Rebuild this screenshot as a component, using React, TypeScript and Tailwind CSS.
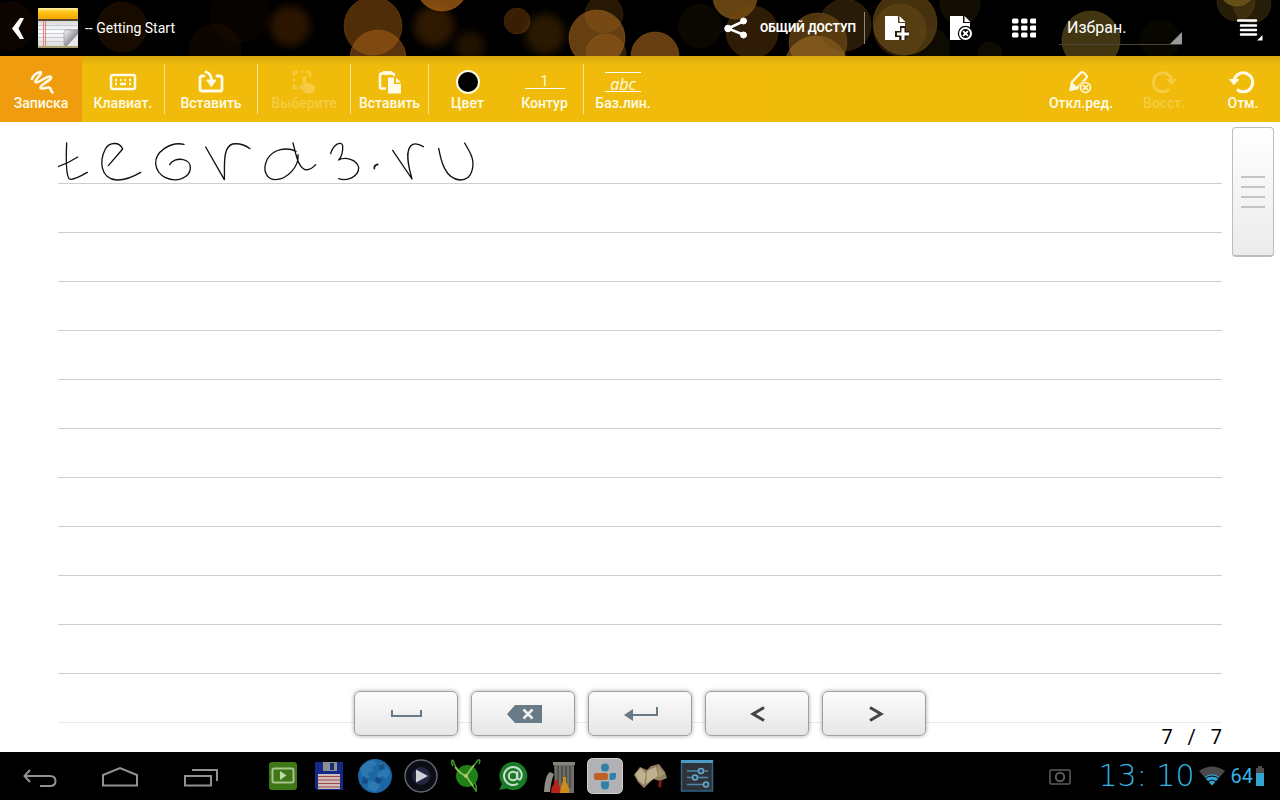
import type { ReactNode } from 'react';

const bokeh: [number, number, number, string, number][] = [
  [10, 26, 24, '#5a2a00', 0.15],
  [122, 27, 25, '#6a3200', 0.22],
  [240, 12, 30, '#5a2a00', 0.08],
  [215, 50, 26, '#5a2a00', 0.14],
  [373, 26, 29, '#a85e12', 0.48],
  [378, 58, 28, '#b0661a', 0.5],
  [442, -15, 26, '#c07018', 0.65],
  [517, 21, 13, '#8a4c0a', 0.4],
  [604, 14, 19, '#9a5a14', 0.25],
  [597, 38, 28, '#b06c1e', 0.58],
  [606, 54, 20, '#c07a28', 0.25],
  [655, 56, 24, '#a8691c', 0.6],
  [700, 26, 22, '#4a2c06', 0.15],
  [735, -3, 22, '#a87020', 0.6],
  [752, 32, 26, '#7a4a10', 0.38],
  [818, 42, 29, '#9e681c', 0.5],
  [816, 68, 32, '#b07828', 0.5],
  [845, 25, 26, '#6a4814', 0.38],
  [905, 23, 32, '#80591a', 0.55],
  [900, 30, 26, '#8a661e', 0.25],
  [960, 4, 20, '#5a4412', 0.2],
  [930, 48, 20, '#5a4412', 0.16],
  [990, 54, 12, '#5a4412', 0.16],
  [1091, 40, 29, '#786020', 0.55],
  [1160, 40, 20, '#3a2e0c', 0.12],
  [1237, -12, 18, '#a88c30', 0.55],
  [1236, 2, 19, '#6a5418', 0.35],
  [1252, 4, 19, '#6a5418', 0.35],
];

const haze: [number, number, number, string, number][] = [
  [290, 26, 20, '#7a3800', 0.35],
  [434, 26, 20, '#7a4205', 0.38],
  [470, 46, 14, '#7a4205', 0.28],
  [545, 34, 20, '#6e3e08', 0.38],
];

function Bokeh() {
  return (
    <svg aria-hidden="true" className="absolute inset-0 h-full w-full" viewBox="0 0 1280 56" preserveAspectRatio="xMidYMid slice">
      <defs>
        <filter id="soft" x="-50%" y="-50%" width="200%" height="200%">
          <feGaussianBlur stdDeviation="4" />
        </filter>
      </defs>
      <g filter="url(#soft)">
        {haze.map(([x, y, r, c, o], i) => (
          <circle key={i} cx={x} cy={y} r={r} fill={c} fillOpacity={o} />
        ))}
      </g>
      {bokeh.map(([x, y, r, c, o], i) => (
        <circle key={i} cx={x} cy={y} r={r} fill={c} fillOpacity={o} stroke={c} strokeOpacity={o * 0.7} strokeWidth="1" />
      ))}
    </svg>
  );
}

function NoteAppIcon() {
  return (
    <svg width="42" height="42" viewBox="0 0 42 42" aria-hidden="true">
      <defs>
        <linearGradient id="band" x1="0" y1="0" x2="0" y2="1">
          <stop offset="0" stopColor="#fff3b0" />
          <stop offset="0.3" stopColor="#ffc61a" />
          <stop offset="1" stopColor="#f2a000" />
        </linearGradient>
        <linearGradient id="sheet" x1="0" y1="0" x2="0" y2="1">
          <stop offset="0" stopColor="#d8d8d8" />
          <stop offset="0.4" stopColor="#ffffff" />
          <stop offset="1" stopColor="#dadada" />
        </linearGradient>
        <linearGradient id="curl" x1="0" y1="0" x2="1" y2="1">
          <stop offset="0" stopColor="#ffffff" />
          <stop offset="0.6" stopColor="#8e8e96" />
          <stop offset="1" stopColor="#d0d0d4" />
        </linearGradient>
      </defs>
      <rect x="1" y="1" width="40" height="12" rx="1" fill="url(#band)" />
      <rect x="1" y="12" width="40" height="2" fill="#5a4a30" />
      <rect x="1" y="14" width="40" height="26" fill="url(#sheet)" />
      <path d="M1 18.500H41M1 22.500H41M1 26.500H41M1 30.500H41M1 34.500H41" stroke="#c4cad2" strokeWidth="1" />
      <path d="M6.500 14V40M8.500 14V40" stroke="#ec7a7a" strokeWidth="1" />
      <path d="M27 38V25Q27 23 29 23H41L41 27L30 39Z" fill="url(#curl)" stroke="#8a8a90" strokeWidth="0.600" />
      <path d="M41 27L41 39H30Z" fill="#e8e8ea" />
      <rect x="1" y="39" width="40" height="2" fill="#a8a070" />
    </svg>
  );
}

function Glyph({ children }: { children: ReactNode }) {
  return (
    <svg width="40" height="24" viewBox="0 0 40 24" fill="none" stroke="currentColor" strokeWidth="2.500" strokeLinecap="round" strokeLinejoin="round" aria-hidden="true">
      {children}
    </svg>
  );
}

function Tool({ label, width, divider, active, disabled, children }: {
  label: string;
  width: string;
  divider?: boolean;
  active?: boolean;
  disabled?: boolean;
  children: ReactNode;
}) {
  return (
    <div className={`flex shrink-0 items-center ${width} ${active ? 'bg-[#ef9d0f]' : ''}`}>
      <button
        type="button"
        disabled={disabled}
        aria-pressed={active}
        className={`flex h-full min-w-0 flex-1 flex-col items-center pt-[14px] text-sm leading-[18px] font-medium whitespace-nowrap ${disabled ? 'text-[#f6cb42]' : 'text-[#fffbe6]'}`}
      >
        {children}
        <span>{label}</span>
      </button>
      {divider && <span className="h-[50px] w-px bg-[#f9e39a]" />}
    </div>
  );
}

function Ink() {
  return (
    <svg width="442" height="62" viewBox="54 -6 1326 186" fill="none" stroke="#111" strokeWidth="4" strokeLinecap="round" strokeLinejoin="round" role="img" aria-label="tegra3.ru">
      <path d="M80 57C78 100 77 150 87 164C97 172 125 155 142 145M54 128C75 121 95 111 113 99" />
      <path d="M205 125L248 75C238 52 208 54 196 75C178 110 180 164 230 168C255 169 285 155 302 145" />
      <path d="M432 61C390 52 344 85 347 120C352 160 395 175 425 164C460 150 458 112 430 107C412 103 395 110 389 122" />
      <path d="M497 69L553 167C555 130 546 70 578 60C600 57 618 65 630 74" />
      <path d="M768 82C740 68 700 75 682 105C665 140 680 167 708 167C745 164 778 125 774 92M759 57C768 90 773 127 795 137C808 139 820 130 827 122" />
      <path d="M872 89C880 60 904 50 908 65C909 82 903 100 896 108C915 98 950 105 956 130C957 158 922 173 896 164" />
      <path d="M1003 134C1002 126 1008 122 1013 121" strokeWidth="5" />
      <path d="M1058 79L1116 165C1106 130 1092 75 1118 61C1130 57 1142 63 1150 68" />
      <path d="M1196 73C1203 110 1215 165 1260 168C1302 168 1305 115 1291 88C1285 75 1279 66 1274 57" />
    </svg>
  );
}

function PadKey({ label, children }: { label: string; children: ReactNode }) {
  return (
    <button
      type="button"
      aria-label={label}
      className="flex h-[45px] w-[104px] items-center justify-center rounded-md border border-[#a0a0a0] bg-linear-to-b from-[#fcfcfc] to-[#e6e6e6] shadow-[0_0_4px_rgba(0,0,0,0.35)]"
    >
      <svg width="48" height="24" viewBox="0 0 48 24" fill="none" aria-hidden="true">{children}</svg>
    </button>
  );
}

function Dock({ label, children }: { label: string; children: ReactNode }) {
  return (
    <button type="button" aria-label={label} className="flex w-[46px] shrink-0 items-center justify-center">
      <svg width="40" height="40" viewBox="0 0 40 40" fill="none" aria-hidden="true">{children}</svg>
    </button>
  );
}

function SysButton({ label, children }: { label: string; children: ReactNode }) {
  return (
    <button type="button" aria-label={label} className="flex w-20 shrink-0 items-center justify-center">
      <svg width="40" height="24" viewBox="0 0 40 24" fill="none" stroke="#929292" strokeWidth="2" aria-hidden="true">{children}</svg>
    </button>
  );
}

const rules = Array.from({ length: 10 }, (_, i) => i);

export default function App() {
  return (
    <div className="flex min-h-screen flex-col bg-white font-[Roboto,'Noto_Sans',sans-serif]">
      <header className="relative h-14 overflow-hidden bg-black text-white">
        <Bokeh />
        <div className="relative flex h-full items-stretch">
          <button type="button" aria-label="Назад" className="flex items-center gap-3 pl-3">
            <svg width="13" height="24" viewBox="0 0 13 24" aria-hidden="true">
              <path d="M8 2H12L6.500 12.500L12 23H8L0 12.500Z" fill="#fff" />
            </svg>
            <NoteAppIcon />
          </button>
          <h1 className="ml-[6px] self-center text-sm font-normal">-- Getting Start</h1>
          <div className="ml-auto flex items-stretch">
            <button type="button" className="flex items-center gap-3 pr-2 pl-3 text-xs font-bold whitespace-nowrap">
              <svg width="24" height="22" viewBox="0 0 24 22" fill="#fff" stroke="#fff" aria-hidden="true">
                <path d="M19 4.500L4 11.500L19 17.500" fill="none" strokeWidth="2.500" />
                <circle cx="19.500" cy="4" r="3" />
                <circle cx="4" cy="11.500" r="3.300" />
                <circle cx="19.500" cy="18" r="3" />
              </svg>
              <span>ОБЩИЙ ДОСТУП</span>
            </button>
            <span className="h-8 w-px self-center bg-[#8f8878]" />
            <button type="button" aria-label="Добавить страницу" className="flex w-16 items-center justify-center">
              <svg width="24" height="24" viewBox="0 0 24 24" aria-hidden="true">
                <path d="M0 0H13V7H20V14H15V16H11V21H14V24H0Z" fill="#fff" />
                <path d="M14.500 0L20.500 6H14.500Z" fill="#fff" />
                <path d="M18 10V24M10 18H24" stroke="#2a1c08" strokeWidth="6" />
                <path d="M18 12V24M12 18H24" stroke="#fff" strokeWidth="3" />
              </svg>
            </button>
            <button type="button" aria-label="Удалить страницу" className="flex w-16 items-center justify-center">
              <svg width="24" height="24" viewBox="0 0 24 24" aria-hidden="true">
                <path d="M1 0H14V7H21V24H1Z" fill="#fff" />
                <path d="M15.500 0L21.500 6H15.500Z" fill="#fff" />
                <circle cx="16.500" cy="17.500" r="7.700" fill="#050300" />
                <circle cx="16.500" cy="17.500" r="5.500" fill="none" stroke="#fff" strokeWidth="2" />
                <path d="M14.100 15.100L18.900 19.900M18.900 15.100L14.100 19.900" stroke="#fff" strokeWidth="2" />
              </svg>
            </button>
            <button type="button" aria-label="Все страницы" className="flex w-[62px] items-center justify-center">
              <svg width="24" height="20" viewBox="0 0 24 20" fill="#fff" aria-hidden="true">
                {[0, 7, 14].map((y) => [0, 9, 18].map((x) => <rect key={`${x}-${y}`} x={x} y={y + 0.5} width="6.500" height="5" rx="1.500" />))}
              </svg>
            </button>
            <div className="relative ml-1 w-[123px] self-center border-b border-[#4a4636]">
              <select aria-label="Избранное" defaultValue="fav" className="h-8 w-full appearance-none bg-transparent pl-2 text-base text-white outline-none">
                <option value="fav">Избран.</option>
              </select>
              <svg className="pointer-events-none absolute right-0 bottom-0" width="12" height="12" viewBox="0 0 12 12" aria-hidden="true">
                <path d="M12 0V12H0Z" fill="#9a9a9a" />
              </svg>
            </div>
            <button type="button" aria-label="Меню" className="ml-[38px] flex w-[60px] items-center justify-center">
              <svg width="26" height="26" viewBox="0 0 26 26" fill="none" stroke="#fff" aria-hidden="true">
                <path d="M1 5.500H19M4 10.500H19M4 15H19M4 19.500H19" strokeWidth="2.500" strokeLinecap="round" />
                <path d="M25.500 20V25.500H20Z" fill="#fff" stroke="none" />
              </svg>
            </button>
          </div>
        </div>
      </header>

      <nav aria-label="Инструменты" className="flex h-[66px] items-stretch bg-linear-to-b from-[#d9a90c] via-[#f0bb0b] via-15% to-[#f0bb0b]">
        <Tool label="Записка" width="w-[82px]" active>
          <Glyph>
            <path d="M11 9C11.500 6 16 2 19.500 2C22 4 13.500 9.500 14.500 12C18 14 24 6 29.500 6.500C33 9.500 18.500 14.500 19.500 18C22 20 27 16 29 18C30.500 20 30 22 31.500 22.500" strokeWidth="2.600" />
          </Glyph>
        </Tool>
        <Tool label="Клавиат." width="w-[83px]" divider>
          <Glyph>
            <rect x="8" y="5" width="24" height="14" rx="2" />
            <path d="M12 10H14M17 10H18.500M21.500 10H23M26 10H28M12 14H14M17 14H23M26 14H28" strokeWidth="2.500" strokeLinecap="butt" />
          </Glyph>
        </Tool>
        <Tool label="Вставить" width="w-[93px]" divider>
          <Glyph>
            <path d="M13 6H11Q9 6 9 8V19Q9 21 11 21H29Q31 21 31 19V8Q31 6 29 6H26" strokeWidth="2.800" />
            <path d="M15 2C19 3 20.500 6 20.500 11" strokeWidth="2.800" />
            <path d="M16 10H25L20.500 16.500Z" fill="currentColor" strokeWidth="1" />
          </Glyph>
        </Tool>
        <Tool label="Выберите" width="w-[93px]" divider disabled>
          <Glyph>
            <path d="M10 6V2H14M22 2H26V7M10 14V18H14M17 2H19M10 9V11" strokeWidth="2.500" strokeLinecap="butt" />
            <path d="M19 7Q20.500 6 21.500 7.500V13L28 14.500Q30.500 15 30.500 18L29 23H22L15.500 17Q15.500 15 17.500 15.500L19 16.500Z" fill="currentColor" strokeWidth="1" />
          </Glyph>
        </Tool>
        <Tool label="Вставить" width="w-[78px]" divider>
          <Glyph>
            <path d="M15 18.500H11.500Q10 18.500 10 17V5Q10 3.500 11.500 3.500H22.500Q24 3.500 24 5" strokeWidth="2.500" />
            <path d="M13.500 1.500H21.500V4H13.500Z" fill="currentColor" strokeWidth="1" />
            <path d="M18 7.500H24V14H31V23.500H18Z" fill="currentColor" stroke="none" />
            <path d="M26 7.500L31 12.500H26Z" fill="currentColor" stroke="none" />
          </Glyph>
        </Tool>
        <Tool label="Цвет" width="w-[77px]">
          <Glyph>
            <circle cx="20" cy="12" r="11" fill="#000" strokeWidth="2" />
          </Glyph>
        </Tool>
        <Tool label="Контур" width="w-[78px]" divider>
          <span className="flex h-6 w-10 items-start justify-center">
            <span className="w-10 border-b border-white pt-1 text-center text-sm leading-[14px] font-normal">1</span>
          </span>
        </Tool>
        <Tool label="Баз.лин." width="w-[78px]">
          <span className="flex h-6 w-9 flex-col pt-[2px]">
            <span className="h-5 border-y border-white pt-[2px] text-center font-['Open_Sans',sans-serif] text-base leading-[18px] font-normal italic">abc</span>
          </span>
        </Tool>
        <div className="ml-auto flex items-stretch">
          <Tool label="Откл.ред." width="w-[82px]">
            <Glyph>
              <path d="M9.500 20L11 12L20 2.500Q21.500 1.500 23 3L25.500 5.500Q26.500 7 25 8.500L16 18Z" strokeWidth="2.300" />
              <path d="M9 21L11 12L18 19Z" fill="currentColor" stroke="none" />
              <circle cx="24.500" cy="17.500" r="6.500" fill="#f0bb0b" stroke="none" />
              <circle cx="24.500" cy="17.500" r="5" strokeWidth="1.500" />
              <path d="M22.500 15.500L26.500 19.500M26.500 15.500L22.500 19.500" strokeWidth="1.600" />
            </Glyph>
          </Tool>
          <Tool label="Восст." width="w-[84px]" disabled>
            <Glyph>
              <path d="M25 19.500A9.500 9.500 0 1 1 28 10" strokeWidth="3" strokeLinecap="butt" />
              <path d="M23 9.500H32L28 14.500Z" fill="currentColor" strokeWidth="1" />
            </Glyph>
          </Tool>
          <Tool label="Отм." width="w-[74px]">
            <Glyph>
              <path d="M14 19.500A9.500 9.500 0 1 0 11 10" strokeWidth="3" strokeLinecap="butt" />
              <path d="M7 9.500H16L11 14.500Z" fill="currentColor" strokeWidth="1" />
            </Glyph>
          </Tool>
        </div>
      </nav>

      <main className="relative flex flex-1 flex-col bg-white">
        <div className="flex items-start">
          <div className="ml-[58px] min-w-0 flex-1">
            <div className="h-[62px] border-b border-[#cfcfcf]">
              <Ink />
            </div>
            {rules.map((i) => (
              <div key={i} className="h-[49px] border-b border-[#cfcfcf]" />
            ))}
            <div className="h-[49px] border-b border-[#e8e8e8]" />
          </div>
          <div className="flex w-[58px] shrink-0 justify-end pt-[5px] pr-[6px]">
            <div className="flex h-[130px] w-[42px] flex-col items-center justify-center gap-2 rounded border border-b-2 border-[#bdbdbd] bg-linear-to-b from-white to-[#ebebeb]">
              <span className="h-[2px] w-6 bg-[#c4c4c4]" />
              <span className="h-[2px] w-6 bg-[#c4c4c4]" />
              <span className="h-[2px] w-6 bg-[#c4c4c4]" />
              <span className="h-[2px] w-6 bg-[#c4c4c4]" />
            </div>
          </div>
        </div>
        <p className="pr-[58px] text-right text-xl leading-7 whitespace-pre text-black">7   /   7</p>

        <div className="absolute inset-x-0 bottom-4 flex justify-center gap-[13px]">
          <PadKey label="Пробел">
            <path d="M10 8V14H39V8" stroke="#687a86" strokeWidth="2" />
          </PadKey>
          <PadKey label="Удалить">
            <path d="M8 12L16 3H43V21H16Z" fill="#687a86" />
            <path d="M24.500 7.500L33.500 16.500M33.500 7.500L24.500 16.500" stroke="#f0f0f0" strokeWidth="2.500" />
          </PadKey>
          <PadKey label="Ввод">
            <path d="M41 5V13H15" stroke="#687a86" strokeWidth="2" />
            <path d="M8 13L17 7V19Z" fill="#687a86" />
          </PadKey>
          <PadKey label="Курсор влево">
            <path d="M31 5.500L20 12L31 18.500" stroke="#444" strokeWidth="3" />
          </PadKey>
          <PadKey label="Курсор вправо">
            <path d="M20 5.500L31 12L20 18.500" stroke="#444" strokeWidth="3" />
          </PadKey>
        </div>
      </main>

      <footer className="flex h-12 items-stretch bg-black">
        <SysButton label="Назад">
          <path d="M20 22H30Q35.500 22 35.500 17Q35.500 12 30 12H5M10 6L4.500 12L10 18" />
        </SysButton>
        <SysButton label="Домой">
          <path d="M3 21.500V11L20 4L37 11V21.500Z" />
        </SysButton>
        <SysButton label="Недавние">
          <path d="M5 12H31V21.500H5ZM12 6H37V17" />
        </SysButton>
        <div className="ml-5 flex items-stretch">
          <Dock label="Видео">
            <rect x="6" y="6" width="28" height="28" rx="3" fill="#3f7716" />
            <rect x="9.500" y="12.500" width="21" height="14" rx="1.500" stroke="#a8c48e" strokeWidth="2" />
            <path d="M17 15L23.500 19.500L17 24Z" fill="#c4d8b0" />
          </Dock>
          <Dock label="Файлы">
            <path d="M6 6H34V34H8L6 32Z" fill="#142a86" />
            <rect x="14" y="6" width="14" height="9" fill="#8e8e94" />
            <rect x="21" y="7" width="4" height="7" fill="#182c70" />
            <rect x="9" y="18" width="22" height="15" fill="#cdbcbc" />
            <path d="M9 20.500H31M9 24H31M9 27.500H31M9 31H31" stroke="#a04848" strokeWidth="1" />
          </Dock>
          <Dock label="Браузер">
            <circle cx="20" cy="20" r="17" fill="#1d66a4" />
            <path d="M5 13Q10 5 19 4L22 9L16 11L19 15L13 17L14 22L9 24L7 20ZM24 6Q32 9 35 17L31 23L28 20L23 22L22 17L27 14ZM14 25L23 26L25 31L20 36L12 33Z" fill="#4b9ccc" opacity="0.350" />
            <path d="M8 20L13 23L12 28L7 27ZM24 9L29 8L30 13L25 14ZM21 21L27 23L24 28L20 26Z" fill="#0b3b6c" opacity="0.600" />
          </Dock>
          <Dock label="Плеер">
            <circle cx="20" cy="20" r="16" fill="#0c0d16" stroke="#62656c" strokeWidth="1.500" />
            <circle cx="20" cy="20" r="9" fill="#222640" />
            <path d="M15 13.500L27 20L15 26.500Z" fill="#cfd0d8" />
          </Dock>
          <Dock label="Навигатор">
            <circle cx="20" cy="20" r="11" fill="#208018" />
            <path d="M6 4Q3 5 6 10M6 4Q8 14 19 20L31 4M31 4Q34 3 32 8M19 20L29 35Q30 31 28 27" stroke="#3c9a2c" strokeWidth="1.500" />
            <path d="M8 11Q12 17 19 20L27 9M19 20L26 30" stroke="#a4c45c" strokeWidth="1.500" />
            <circle cx="19" cy="20" r="2" fill="#b8c868" />
          </Dock>
          <Dock label="Агент">
            <path d="M20 6A14 14 0 1 1 14 32.500L6 34L9 28A14 14 0 0 1 20 6Z" fill="#187c28" />
            <circle cx="20" cy="20" r="4.200" stroke="#d0dcd0" strokeWidth="2" />
            <path d="M24.300 15.500V21Q24.500 24 27 23.500Q29.500 21 28.500 17A9 9 0 1 0 25 27.500" stroke="#d0dcd0" strokeWidth="2" />
          </Dock>
          <Dock label="Корзина">
            <path d="M15 6H35V37H16Z" fill="#6e6e68" />
            <path d="M14 6H36V9H14Z" fill="#85857e" />
            <path d="M19 10V30M23 10V30M27 10V32M31 10V32" stroke="#484844" strokeWidth="1.500" />
            <path d="M5 36Q6 19 11 16L15 18Q12 25 11 36Z" fill="#8c8c86" />
            <path d="M12 37Q12 31 15 28V24H19V28Q23 32 21 37Z" fill="#b42418" />
            <path d="M21 37Q22 29 24 25V21H27V26Q31 32 30 37Z" fill="#cf8c16" />
          </Dock>
          <Dock label="Медицина">
            <rect x="2.500" y="2.500" width="35" height="35" rx="5" fill="#b2b2b4" stroke="#d0d0d0" strokeWidth="1" />
            <circle cx="20" cy="11.500" r="4" fill="#3280a8" />
            <rect x="9" y="17" width="14" height="7" rx="2" fill="#c06028" />
            <path d="M24.500 24V19Q24.500 17 27 17H31V20Q31 24 27.500 24Z" fill="#3280a8" />
            <path d="M16 25.500H24V29Q24 33.500 20 33.500Q16 33.500 16 30Z" fill="#3280a8" />
          </Dock>
          <Dock label="Книги">
            <path d="M3 19L9 11L16 14L20 10L28 8L34 16L36 22L29 25L22 23L13 32L7 26Z" fill="#8f8060" />
            <path d="M4 18L10 12L15 18L13 29L8 25ZM16 15L25 11L27 20L15 28Z" fill="#c0b28e" />
            <path d="M27 10L31 15L34 17L28 22Z" fill="#a8966e" />
            <path d="M28 25L31 24L30 32L27 30Z" fill="#7c1c14" />
          </Dock>
          <Dock label="Настройки">
            <rect x="4.500" y="5" width="31" height="30" fill="#2d3338" stroke="#326482" strokeWidth="1.500" />
            <path d="M4 5.500H36" stroke="#4a9cc8" strokeWidth="3" />
            <path d="M10 15H31M10 21.500H31M10 28.500H31" stroke="#4f87a8" strokeWidth="1.500" />
            <circle cx="24" cy="15" r="2.500" fill="#27414f" stroke="#68a8cc" strokeWidth="1.500" />
            <circle cx="18" cy="21.500" r="2.500" fill="#27414f" stroke="#68a8cc" strokeWidth="1.500" />
            <circle cx="29" cy="28.500" r="2.500" fill="#27414f" stroke="#68a8cc" strokeWidth="1.500" />
          </Dock>
        </div>

        <div className="ml-auto flex items-center pr-4 text-[#33b5e5]">
          <svg className="mr-7" width="22" height="18" viewBox="0 0 22 18" fill="none" stroke="#5c5c5c" strokeWidth="1.500" role="img" aria-label="Снимок экрана">
            <rect x="1" y="3" width="20" height="14" rx="1" />
            <circle cx="11" cy="10" r="4.200" strokeWidth="2" />
          </svg>
          <time className="font-['DejaVu_Sans',sans-serif] text-[30px] leading-8 font-extralight whitespace-pre">13: 10</time>
          <svg className="ml-1" width="26" height="20" viewBox="0 0 26 20" role="img" aria-label="Wi-Fi">
            <path d="M0 5Q13 -4 26 5L13 19.500Z" fill="#4a4a4a" />
            <path d="M5.500 11Q13 5.500 20.500 11L13 19.500Z" fill="#33a5d3" />
            <path d="M6 12.500Q13 7.500 20 12.500M9 15.500Q13 12.500 17 15.500" fill="none" stroke="#000" strokeWidth="1" />
          </svg>
          <span className="ml-[6px] text-xl">64</span>
          <svg className="ml-[3px]" width="8" height="20" viewBox="0 0 8 20" role="img" aria-label="Батарея">
            <path d="M2 0H6V2H8V20H0V2H2Z" fill="#4c4c4c" />
            <rect y="7" width="8" height="13" fill="#33a5d3" />
          </svg>
        </div>
      </footer>
    </div>
  );
}
